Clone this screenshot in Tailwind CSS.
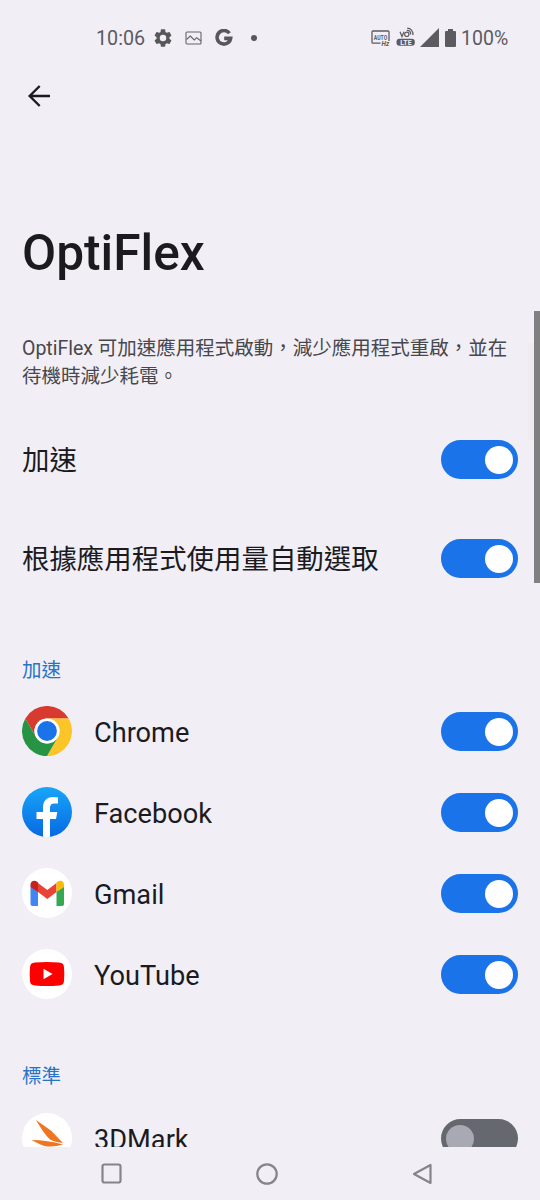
<!DOCTYPE html>
<html lang="zh-Hant">
<head>
<meta charset="utf-8">
<title>OptiFlex</title>
<script src="https://cdn.jsdelivr.net/npm/@tailwindcss/browser@4"></script>
</head>
<body class="bg-[#f1eff5]">
<div class="relative flex h-[1200px] w-[540px] flex-col overflow-hidden bg-[#f1eff5] font-['Roboto','Noto_Sans_CJK_TC',sans-serif] text-[#1b1b1f]">
  <header class="flex h-[75px] shrink-0 items-center pl-24 pr-8 text-[19.700px] text-[#5c5b60]">
    <span class="w-[50px] whitespace-nowrap pt-[2px]">10:06</span>
    <svg class="ml-2 size-[18px]" viewBox="2 2 20 20" fill="#58575c"><path d="M19.14 12.94c.04-.3.06-.61.06-.94 0-.32-.02-.64-.07-.94l2.03-1.58c.18-.14.23-.41.12-.61l-1.92-3.32c-.12-.22-.37-.29-.59-.22l-2.39.96c-.5-.38-1.03-.7-1.62-.94l-.36-2.54c-.04-.24-.24-.41-.48-.41h-3.84c-.24 0-.43.17-.47.41l-.36 2.54c-.59.24-1.13.57-1.62.94l-2.39-.96c-.22-.08-.47 0-.59.22L2.74 8.87c-.12.21-.08.47.12.61l2.03 1.58c-.05.3-.09.63-.09.94s.02.64.07.94l-2.03 1.58c-.18.14-.23.41-.12.61l1.92 3.32c.12.22.37.29.59.22l2.39-.96c.5.38 1.03.7 1.62.94l.36 2.54c.05.24.24.41.48.41h3.84c.24 0 .44-.17.47-.41l.36-2.54c.59-.24 1.13-.56 1.62-.94l2.39.96c.22.08.47 0 .59-.22l1.92-3.32c.12-.22.07-.47-.12-.61l-2.01-1.58zM12 15.6A3.6 3.6 0 1 1 12 8.4a3.6 3.6 0 0 1 0 7.2z"/></svg>
    <svg class="ml-[13px] h-[14px] w-[18px]" viewBox="0 0 18 14" fill="none" stroke="#65646a" stroke-width="1.100"><rect x="1" y="1" width="15" height="12" rx="1"/><path d="M1.500 8.500 5.300 5l4 4 2.400-2.300L16 10"/></svg>
    <svg class="ml-3 size-[18px]" viewBox="0 0 18 18" fill="none" stroke="#58575c" stroke-width="3.600"><path d="M14.400 4.300A6.800 6.800 0 1 0 15.600 9.400H9.200"/></svg>
    <span class="ml-[18px] size-[6px] rounded-full bg-[#58575c]"></span>
    <svg class="ml-auto h-[22px] w-[19px]" viewBox="0 0 19 22" fill="none" stroke="#5c5b60" stroke-width="1.300"><path d="M9.500 16.200H2a1 1 0 0 1-1-1V5a1 1 0 0 1 1-1h15a1 1 0 0 1 1 1v9"/><text x="2.800" y="12.600" font-size="7" font-weight="700" textLength="13.400" lengthAdjust="spacingAndGlyphs" fill="#5c5b60" stroke="none">AUTO</text><text x="10.500" y="18.600" font-size="6.500" font-style="italic" font-weight="700" fill="#5c5b60" stroke="none">Hz</text></svg>
    <svg class="ml-[6px] h-[22px] w-5" viewBox="0 0 20 22" fill="none" stroke="#5c5b60" stroke-width="1.200"><rect x="0.500" y="11.800" width="18.300" height="7" rx="3" fill="#5c5b60" stroke="none"/><text x="4.200" y="17.800" font-size="7" font-weight="700" textLength="11.500" fill="#f1eff5" stroke="none">LTE</text><path d="m4 4.800 2 4.800 2-4.800"/><circle cx="10.800" cy="7.300" r="2.200"/><path d="M10.800 3.300a3.600 3.600 0 0 1 3.900 4.200M11.200 1.200a5.800 5.800 0 0 1 5.600 7"/></svg>
    <svg class="ml-1 h-[19px] w-[19px]" viewBox="0 0 19 19" fill="#5c5b60"><path d="M0 19 19 0v19z"/></svg>
    <svg class="ml-[6px] h-[18px] w-[11px]" viewBox="0 0 11 18" fill="#5c5b60"><path d="M3 0h5v2h2q1 0 1 1v14q0 1-1 1H1q-1 0-1-1V3q0-1 1-1h2z"/></svg>
    <span class="ml-[5px] w-[47px] whitespace-nowrap pt-[3px] text-[19.500px]">100%</span>
  </header>
  <nav class="flex h-[42px] shrink-0 items-center pl-7">
    <svg class="h-[22px] w-[22px]" viewBox="0 0 22 22" fill="none" stroke="#1b1b1f" stroke-width="2.400"><path d="M22 11H1.700M11.700 1 1.700 11l10 10"/></svg>
  </nav>
  <main class="flex h-[1030px] shrink-0 flex-col overflow-hidden pl-[22px] pr-[22px]">
    <h1 class="mt-[106px] h-[60px] shrink-0 text-[49.600px] font-medium leading-[60px]">OptiFlex</h1>
    <p class="mt-[52px] h-14 shrink-0 whitespace-nowrap text-[19.500px] leading-7 text-[#48474c]">OptiFlex 可加速應用程式啟動，減少應用程式重啟，並在<br>待機時減少耗電。</p>
    <section class="mt-[19px] shrink-0 text-[27.450px]">
      <div class="flex h-[99px] items-center justify-between"><span class="pt-[5px]">加速</span><span class="flex h-[39px] w-[77px] items-center justify-end rounded-full bg-[#1a73e8] pr-[5px]"><i class="size-7 rounded-full bg-white"></i></span></div>
      <div class="flex h-[99px] items-center justify-between"><span class="pt-[5px]">根據應用程式使用量自動選取</span><span class="flex h-[39px] w-[77px] items-center justify-end rounded-full bg-[#1a73e8] pr-[5px]"><i class="size-7 rounded-full bg-white"></i></span></div>
    </section>
    <h2 class="mt-[39px] h-11 shrink-0 pt-[2px] text-[19.500px] leading-[44px] text-[#2872c8]">加速</h2>
    <section class="shrink-0 text-[27.200px]">
      <div class="flex h-[81px] items-center">
        <svg class="mb-px size-[50px]" viewBox="0 0 48 48"><path fill="#d93a2f" d="M3.200 12A24 24 0 0 1 44.800 12H24A12 12 0 0 0 13.600 30Z"/><path fill="#fcc527" d="M44.800 12A24 24 0 0 1 24 48L34.400 30A12 12 0 0 0 24 12Z"/><path fill="#279344" d="M24 48A24 24 0 0 1 3.200 12L13.600 30A12 12 0 0 0 34.400 30Z"/><circle cx="24" cy="24" r="12" fill="#fff"/><circle cx="24" cy="24" r="9.500" fill="#1a73e8"/></svg>
        <span class="ml-[22px] grow pt-1">Chrome</span><span class="flex h-[39px] w-[77px] items-center justify-end rounded-full bg-[#1a73e8] pr-[5px]"><i class="size-7 rounded-full bg-white"></i></span></div>
      <div class="flex h-[81px] items-center">
        <svg class="mb-px size-[50px]" viewBox="0 0 50 50"><defs><linearGradient id="fb" x2="0" y2="1"><stop stop-color="#18a5f8"/><stop offset="1" stop-color="#0769e3"/></linearGradient></defs><circle cx="25" cy="25" r="25" fill="url(#fb)"/><path fill="#fff" d="M21 49.700V32h-6.500v-7H21v-4c0-7 3.500-11 9.800-11 2 0 3.900.2 5.200.5v6h-3.500c-3.200 0-4.500 1.500-4.500 4.300V25h7.300l-1.300 7h-6v17.800q-3.500.4-7-.1Z"/></svg>
        <span class="ml-[22px] grow pt-1">Facebook</span><span class="flex h-[39px] w-[77px] items-center justify-end rounded-full bg-[#1a73e8] pr-[5px]"><i class="size-7 rounded-full bg-white"></i></span></div>
      <div class="flex h-[81px] items-center">
        <svg class="mb-px size-[50px]" viewBox="0 0 50 50"><circle cx="25" cy="25" r="25" fill="#fff"/><path fill="#4285f4" d="M8.500 18.500 16 23.500V38h-5.500q-2 0-2-2Z"/><path fill="#34a853" d="M42 18.500 34.500 23.500V38H40q2 0 2-2Z"/><path fill="#ea4335" d="m16 15 9.300 7 9.200-7v9l-9.200 7-9.300-7Z"/><path fill="#c5221f" d="M8.500 19v-2c0-4.200 4-5.300 7-3l.5.400V24l-7.500-5Z"/><path fill="#fbbc04" d="M42 19v-2c0-4.200-4-5.300-7-3l-.5.400V24l7.500-5Z"/></svg>
        <span class="ml-[22px] grow pt-1">Gmail</span><span class="flex h-[39px] w-[77px] items-center justify-end rounded-full bg-[#1a73e8] pr-[5px]"><i class="size-7 rounded-full bg-white"></i></span></div>
      <div class="flex h-[81px] items-center">
        <svg class="mb-px size-[50px]" viewBox="0 0 50 50"><circle cx="25" cy="25" r="25" fill="#fff"/><path fill="#f00" d="M13 13.500q12-1 24 0 5 .2 5 5 .6 6.500 0 13 0 4.800-5 5-12 1-24 0-5-.2-5-5-.6-6.500 0-13 0-4.800 5-5Z"/><path fill="#fff" d="m21.500 19.700 9 5.300-9 5.300Z"/></svg>
        <span class="ml-[22px] grow pt-1">YouTube</span><span class="flex h-[39px] w-[77px] items-center justify-end rounded-full bg-[#1a73e8] pr-[5px]"><i class="size-7 rounded-full bg-white"></i></span></div>
    </section>
    <h2 class="mt-[38px] h-11 shrink-0 pt-[2px] text-[19.500px] leading-[44px] text-[#2872c8]">標準</h2>
    <div class="mt-px flex h-[81px] shrink-0 items-center text-[27.200px]">
      <svg class="mb-px size-[50px]" viewBox="0 0 50 50"><circle cx="25" cy="25" r="25" fill="#fff"/><path fill="#ee7623" d="M14 7 29.500 18Q36 25 41 30 33 29 28 26.500 22 21 14 7ZM9.500 27q16 0 31.500 4.500-7 2.500-15.500 2-5-.5-16-6.500Z"/></svg>
      <span class="ml-[22px] grow pt-1">3DMark</span><span class="flex h-[39px] w-[77px] items-center rounded-full bg-[#666870] pl-[5px]"><i class="size-7 rounded-full bg-[#a9a9b3]"></i></span></div>
  </main>
  <footer class="flex h-[53px] shrink-0 items-center pl-[101px]">
    <svg class="size-[21px]" viewBox="0 0 21 21" fill="none" stroke="#858489" stroke-width="2.200"><rect x="1.500" y="1.500" width="18" height="18" rx="2"/></svg>
    <svg class="ml-[133px] size-6" viewBox="0 0 24 24" fill="none" stroke="#858489" stroke-width="2.200"><circle cx="12" cy="12" r="9.700"/></svg>
    <svg class="ml-[133px] h-[22px] w-5" viewBox="0 0 20 22" fill="none" stroke="#858489" stroke-width="2.200" stroke-linejoin="round"><path d="M18.500 2v18L2 11Z"/></svg>
  </footer>
  <div class="absolute left-[528px] top-[343px] h-[97px] w-[6px] bg-[#eeecf1]"></div>
  <div class="absolute left-[534px] top-[311px] h-[272px] w-[6px] bg-[#808080]"></div>
</div>
</body>
</html>
